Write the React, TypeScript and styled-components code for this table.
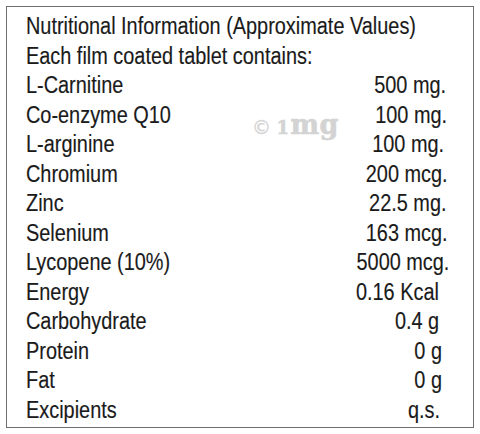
import React from 'react';
import styled, { createGlobalStyle } from 'styled-components';

const GlobalStyle = createGlobalStyle`
    html, body {
        margin: 0;
        padding: 0;
        background: #ffffff;
    }
`;

const Page = styled.div`
    width: 480px;
    height: 434px;
    padding: 6px;
    box-sizing: border-box;
`;

const Panel = styled.div`
    position: relative;
    height: 422px;
    box-sizing: border-box;
    border: 1.5px solid #6f6f6f;
    padding: 5px 0 0 19px;
    font-family: 'Liberation Sans', Arial, sans-serif;
    font-size: 23px;
    line-height: 29.5px;
    color: #1a1a1a;
    -webkit-text-stroke: 0.15px #1a1a1a;
`;

const Row = styled.div`
    display: flex;
    justify-content: space-between;
    white-space: nowrap;
`;

// condensed face is not installed, so squeeze the regular one
const Label = styled.span`
    display: inline-block;
    transform: scaleX(0.865);
    transform-origin: left center;
`;

const Amount = styled.span<{ $inset: number }>`
    display: inline-block;
    margin-right: ${p => p.$inset}px;
    transform: scaleX(0.865);
    transform-origin: right center;
`;

const Watermark = styled.div`
    position: absolute;
    left: 245px;
    top: 104px;
    display: flex;
    align-items: baseline;
    color: #d3d3d3;
    -webkit-text-stroke: 0.6px #d3d3d3;
    font-family: 'DejaVu Serif', serif;
    font-weight: bold;
    font-size: 27px;
    line-height: 1;
    letter-spacing: 0.5px;
`;

const Copy = styled.span`
    margin-right: 5px;
    font-family: 'DejaVu Sans', sans-serif;
    font-weight: normal;
    font-size: 19px;
    -webkit-text-stroke: 0.3px #d3d3d3;
`;

const One = styled.span`
    font-size: 18px;
    margin-right: 1px;
`;

const rows: { name: string; amount: string; inset: number }[] = [
    { name: 'L-Carnitine', amount: '500 mg.', inset: 27 },
    { name: 'Co-enzyme Q10', amount: '100 mg.', inset: 26 },
    { name: 'L-arginine', amount: '100 mg.', inset: 29 },
    { name: 'Chromium', amount: '200 mcg.', inset: 25 },
    { name: 'Zinc', amount: '22.5 mg.', inset: 27 },
    { name: 'Selenium', amount: '163 mcg.', inset: 25 },
    { name: 'Lycopene (10%)', amount: '5000 mcg.', inset: 24 },
    { name: 'Energy', amount: '0.16 Kcal', inset: 34 },
    { name: 'Carbohydrate', amount: '0.4 g', inset: 34 },
    { name: 'Protein', amount: '0 g', inset: 31 },
    { name: 'Fat', amount: '0 g', inset: 31 },
    { name: 'Excipients', amount: 'q.s.', inset: 33 },
];

const App = () => (
    <Page>
        <GlobalStyle />
        <Panel>
            <Row>
                <Label>Nutritional Information (Approximate Values)</Label>
            </Row>
            <Row>
                <Label>Each film coated tablet contains:</Label>
            </Row>
            {rows.map(r => (
                <Row key={r.name}>
                    <Label>{r.name}</Label>
                    <Amount $inset={r.inset}>{r.amount}</Amount>
                </Row>
            ))}
            <Watermark>
                <Copy>©</Copy>
                <One>1</One>mg
            </Watermark>
        </Panel>
    </Page>
);

export default App;
